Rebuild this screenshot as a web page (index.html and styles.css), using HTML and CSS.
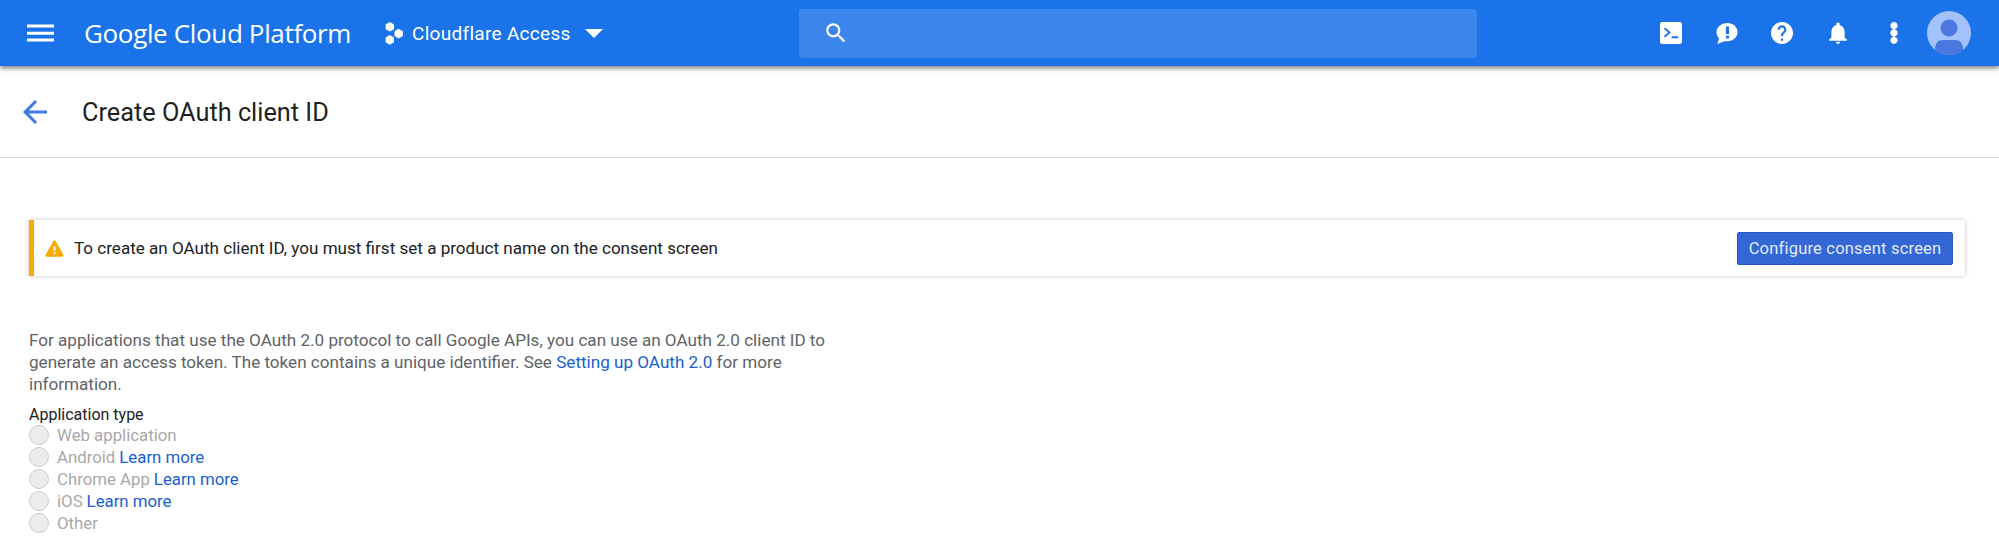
FILE: index.html
```html
<!DOCTYPE html>
<html>
  <head>
    <meta charset="utf-8">
    <title>Create OAuth client ID</title>
    <link rel="stylesheet" href="styles.css">
</head>
<body>
  <header class="topbar">
    <div class="topbar-left">
      <svg class="menu-icon" viewBox="0 0 24 24"><path d="M0 19h24v-2.6H0zm0-6h24v-2.6H0zM0 4v2.600h24V4z"/></svg>
      <span class="brand">Google Cloud Platform</span>
      <svg class="project-icon" viewBox="0 0 18 22">
        <path d="M4.500 0l4 2.300v4.600l-4 2.300-4-2.300V2.300z"/>
        <path d="M4.500 12.500l4 2.300v4.600l-4 2.300-4-2.300v-4.600z"/>
        <path d="M13 6.500l4 2.300v4.600l-4 2.300-4-2.300V8.800z"/>
      </svg>
      <span class="project-name">Cloudflare Access</span>
      <span class="caret"></span>
    </div>
    <div class="search">
      <svg class="search-icon" viewBox="0 0 24 24"><path d="M15.500 14h-.79l-.28-.27C15.410 12.590 16 11.110 16 9.500 16 5.910 13.090 3 9.500 3S3 5.910 3 9.500 5.910 16 9.500 16c1.610 0 3.090-.59 4.230-1.570l.27.28v.79l5 4.990L20.490 19l-4.990-5zm-6 0C7.010 14 5 11.990 5 9.500S7.010 5 9.500 5 14 7.010 14 9.500 11.990 14 9.500 14z"/></svg>
    </div>
    <div class="topbar-right">
      <span class="tool"><svg viewBox="0 0 20 20"><path fill-rule="evenodd" d="M2 0h16a2 2 0 0 1 2 2v16a2 2 0 0 1-2 2H2a2 2 0 0 1-2-2V2a2 2 0 0 1 2-2zm1.500 6.200L7.300 9.500l-3.800 3.300 1.200 1.300 5.200-4.600-5.200-4.600zM10.500 13v1.800h6V13z"/></svg></span>
      <span class="tool"><svg viewBox="0 0 23 24"><path fill-rule="evenodd" d="M12 1c6 0 11 4.300 11 10s-5 10-11 10c-1 0-1.800-.1-2.600-.3L1 24l1.900-6.100C1 16 0 13.700 0 11 0 5.300 6 1 12 1zm-1.700 4v8.200h3.400V5zm0 10v3h3.400v-3z"/></svg></span>
      <span class="tool"><svg viewBox="2 2 20 20"><path d="M12 2C6.480 2 2 6.480 2 12s4.480 10 10 10 10-4.480 10-10S17.520 2 12 2zm1 17h-2v-2h2v2zm2.070-7.750l-.9.920C13.450 12.900 13 13.500 13 15h-2v-.5c0-1.100.45-2.100 1.170-2.830l1.240-1.260c.37-.36.590-.86.590-1.410 0-1.100-.9-2-2-2s-2 .9-2 2H8c0-2.210 1.790-4 4-4s4 1.790 4 4c0 .88-.36 1.680-.93 2.250z"/></svg></span>
      <span class="tool"><svg viewBox="4 2 16 20"><path d="M12 22c1.100 0 2-.9 2-2h-4c0 1.100.89 2 2 2zm6-6v-5c0-3.070-1.640-5.640-4.500-6.320V4c0-.83-.67-1.500-1.500-1.500s-1.500.67-1.500 1.500v.68C7.630 5.360 6 7.920 6 11v5l-2 2v1h16v-1l-2-2z"/></svg></span>
      <span class="tool"><svg viewBox="9 3 6 18"><path d="M12 9c1.500 0 3-1.400 3-3s-1.500-3-3-3-3 1.400-3 3 1.500 3 3 3zm0 0c-1.500 0-3 1.400-3 3s1.500 3 3 3 3-1.400 3-3-1.500-3-3-3zm0 6c-1.500 0-3 1.400-3 3s1.500 3 3 3 3-1.400 3-3-1.500-3-3-3z"/></svg></span>
      <span class="tool">
        <svg class="avatar" viewBox="0 0 44 44">
          <circle cx="22" cy="22" r="22" fill="#a1c2fa"/>
          <circle cx="22" cy="17" r="8.500" fill="#4a78e0"/>
          <path d="M8 39c0-7 3-10 8-10h12c5 0 8 3 8 10a22 22 0 0 1-28 0z" fill="#4a78e0"/>
        </svg>
      </span>
    </div>
  </header>

  <div class="page-title">
    <svg class="back-icon" viewBox="4 4 16 16"><path d="M20 11H7.830l5.590-5.590L12 4l-8 8 8 8 1.410-1.410L7.830 13H20z"/></svg>
    <h1>Create OAuth client ID</h1>
  </div>

  <main class="content">
    <div class="notice">
      <svg class="warn-icon" viewBox="0 0 20 18">
        <path class="warn-body" d="M10 1.500L1.500 16.500h17z"/>
        <path class="warn-mark" d="M9 6.500h2v5H9zm0 6.500h2v2H9z"/>
      </svg>
      <span class="notice-text">To create an OAuth client ID, you must first set a product name on the consent screen</span>
      <button class="consent-btn" type="button">Configure consent screen</button>
    </div>

    <p class="intro">For applications that use the OAuth 2.0 protocol to call Google APIs, you can use an OAuth 2.0 client ID to generate an access token. The token contains a unique identifier. See <a href="#">Setting up OAuth 2.0</a> for more information.</p>

    <div class="type-label">Application type</div>
    <ul class="types">
      <li><span class="radio"></span>Web application</li>
      <li><span class="radio"></span>Android <a href="#">Learn more</a></li>
      <li><span class="radio"></span>Chrome App <a href="#">Learn more</a></li>
      <li><span class="radio"></span>iOS <a href="#">Learn more</a></li>
      <li><span class="radio"></span>Other</li>
    </ul>
  </main>
</body>
</html>
```

FILE: styles.css
```css
body {
  margin: 0;
  height: 547px;
  overflow: hidden;
  background: #fff;
  font-family: Roboto, Arial, sans-serif;
  color: #202124;
}

a {
  color: #1a5fd0;
  text-decoration: none;
}

.topbar {
  display: flex;
  align-items: center;
  height: 66px;
  background: #1a73e8;
  box-shadow: 0 2px 5px rgba(0, 0, 0, 0.55);
  color: #fff;
}

.topbar svg {
  display: block;
  fill: #fff;
}

.topbar-left {
  display: flex;
  align-items: center;
  width: 799px;
  padding-left: 27px;
  box-sizing: border-box;
}

.menu-icon {
  width: 27px;
  height: 27px;
  margin-right: 30px;
}

.brand {
  font-family: "Open Sans", Roboto, sans-serif;
  font-size: 26px;
  letter-spacing: -0.35px;
  width: 301px;
  white-space: nowrap;
}

.project-icon {
  width: 19px;
  height: 23px;
  margin-right: 8px;
}

.project-name {
  font-size: 19px;
  letter-spacing: 0.3px;
  white-space: nowrap;
}

.caret {
  width: 0;
  height: 0;
  margin-left: 14px;
  border-left: 9px solid transparent;
  border-right: 9px solid transparent;
  border-top: 9px solid #fff;
}

.search {
  display: flex;
  align-items: center;
  width: 678px;
  height: 49px;
  padding-left: 24px;
  box-sizing: border-box;
  background: #3b85ed;
  border-radius: 3px;
}

.search-icon {
  width: 26px;
  height: 26px;
}

.topbar-right {
  display: flex;
  align-items: center;
  margin-left: 166px;
}

.tool {
  display: flex;
  justify-content: center;
  align-items: center;
  width: 55.7px;
}

.tool svg {
  width: 22px;
  height: 22px;
}

.tool .avatar {
  width: 44px;
  height: 44px;
}

.page-title {
  display: flex;
  align-items: center;
  height: 91px;
  padding-left: 23px;
  border-bottom: 1px solid #d8d8d8;
}

.back-icon {
  width: 24px;
  height: 24px;
  fill: #3f78e0;
  margin-right: 35px;
}

.page-title h1 {
  margin: 2px 0 0;
  font-size: 25.3px;
  font-weight: 400;
  color: #1f1f1f;
}

.content {
  padding: 62px 34px 0 29px;
}

.notice {
  display: flex;
  align-items: center;
  height: 56px;
  padding: 0 12px 0 11px;
  border-left: 5px solid #f9ab00;
  background: #fff;
  box-shadow: 0 0 4px rgba(0, 0, 0, 0.25);
}

.warn-icon {
  width: 19px;
  height: 17px;
  margin-right: 10px;
}

.warn-body {
  fill: #f9ab00;
  stroke: #f9ab00;
  stroke-width: 2.400;
  stroke-linejoin: round;
}

.warn-mark {
  fill: #fff;
}

.notice-text {
  flex: 1;
  font-size: 17.07px;
  color: #202124;
}

.consent-btn {
  width: 216px;
  height: 33px;
  padding: 0;
  border: 1px solid #2a56c6;
  border-radius: 2px;
  background: #3367d6;
  color: #e3ebfb;
  font-family: Roboto, Arial, sans-serif;
  font-size: 16.5px;
  letter-spacing: 0.2px;
}

.intro {
  width: 815px;
  margin: 53px 0 0;
  font-size: 17.1px;
  line-height: 22px;
  color: #5f6368;
}

.type-label {
  margin-top: 11px;
  font-size: 16px;
  line-height: 18px;
  color: #202124;
}

.types {
  list-style: none;
  margin: 0;
  padding: 0;
}

.types li {
  display: flex;
  align-items: center;
  gap: 4px;
  height: 22px;
  font-size: 16.8px;
  color: #a8a8a8;
}

.radio {
  width: 18px;
  height: 18px;
  margin-right: 4px;
  border: 1px solid #ccc;
  border-radius: 50%;
  background: #ececec;
}
```
